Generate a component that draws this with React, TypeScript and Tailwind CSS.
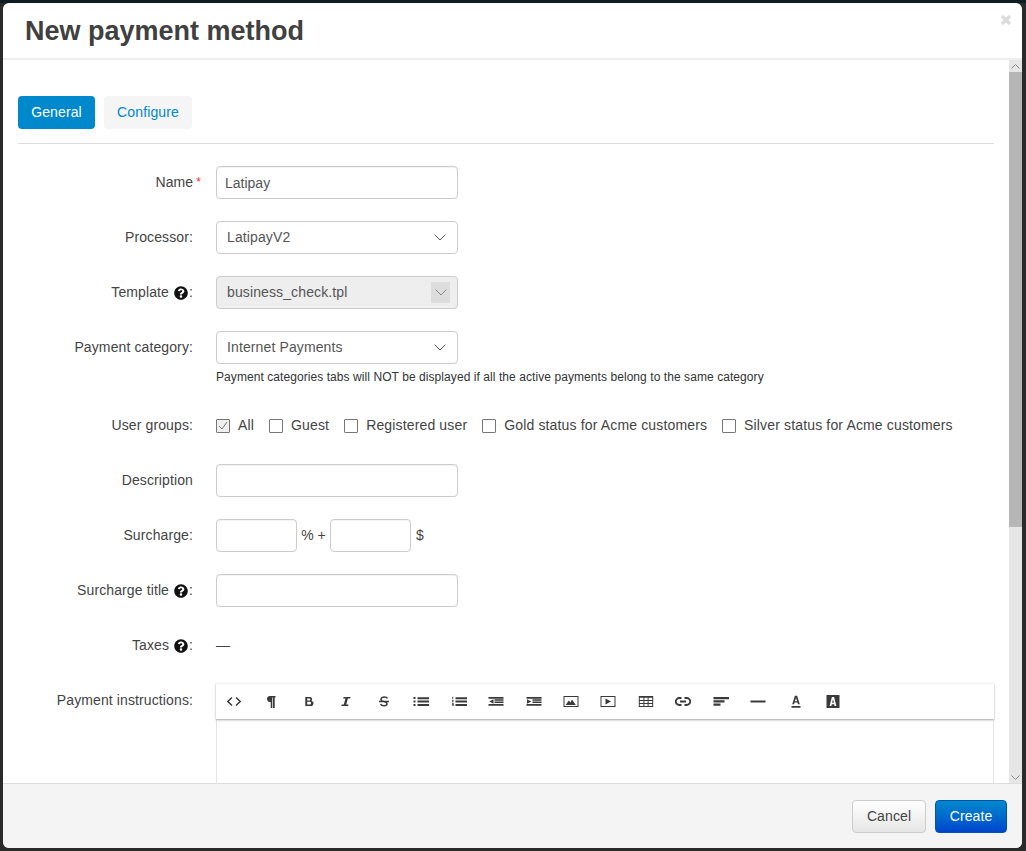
import React from "react";
import { FaQuestionCircle } from "react-icons/fa";

const C = "#3a3a3a";
const ic: Record<string, React.ReactNode> = {
  html: <path d="M6 3.500 1.800 7.500 6 11.500M10 3.500l4.200 4-4.200 4" fill="none" stroke={C} strokeWidth="1.500" />,
  para: <path d="M6.500 2H12.500V3.500h-.8V14H10V3.500H9.300V14H7.700V8A2.900 2.900 0 0 1 6.500 2Z" fill={C} />,
  bold: <path fillRule="evenodd" d="M4.300 3H8.800a2.300 2.300 0 0 1 1.700 3.900A2.500 2.500 0 0 1 9.200 12H4.300ZM6.200 4.500v1.900h2.200a.95.95 0 0 0 0-1.900Zm0 3.300v2.700h2.500a1.350 1.350 0 0 0 0-2.700Z" fill={C} />,
  italic: <path d="M5.500 3h7l-.3 1.400h-2.300L8.300 10.600h2.200L10.200 12H3.300l.3-1.400h2.200L7.400 4.400H5.200Z" fill={C} />,
  strike: <path d="M11.500 4.300C11 3.400 9.900 3 8.300 3 6.400 3 5 3.900 5 5.200c0 1.800 2 2.100 3.500 2.500 1.500.4 2.500.8 2.500 2 0 1.300-1.200 2-3 2-1.700 0-3-.7-3.400-1.700M3 7.600h10" fill="none" stroke={C} strokeWidth="1.500" />,
  ul: <path d="M.5 3h2v2h-2Zm0 3.500h2v2h-2Zm0 3.500h2v2h-2ZM4.500 3.200H16V5.200H4.500Zm0 3.400H16v2H4.500Zm0 3.400H16v2H4.500Z" fill={C} />,
  ol: <path d="M1.300 2.800h.9v2.400h-.9Zm-.4 3.500h1.800v.6l-.9.8h.9v.6H.9v-.6l.9-.8H.9Zm0 3h1.800V12H.9v-.6h.9v-.3H.9v-.5h.9v-.3H.9ZM4.500 3.200H16V5.200H4.500Zm0 3.400H16v2H4.500Zm0 3.400H16v2H4.500Z" fill={C} />,
  outdent: <path d="M.5 3h15v1.700H.5Zm6 2.300h9v1.500h-9Zm0 2.300h9v1.500h-9Zm-6 2.300h15v1.900H.5ZM5.500 5.300v4.400L1.300 7.500Z" fill={C} />,
  indent: <path d="M.5 3h15v1.700H.5Zm6 2.300h9v1.500h-9Zm0 2.300h9v1.500h-9Zm-6 2.300h15v1.900H.5ZM1 5.300v4.400L5.200 7.500Z" fill={C} />,
  image: <path fillRule="evenodd" d="M.5 2h15v11H.5Zm1 1v9h13V3ZM2.700 11l3-4.500 1.800 2 1.500-3 3.800 5.500Z" fill={C} />,
  video: <path fillRule="evenodd" d="M.5 2h15v11H.5Zm1 1v9h13V3ZM5.500 4.500l5.500 3-5.500 3Z" fill={C} />,
  table: <path fillRule="evenodd" d="M.8 2h14.400v11H.8Zm1 1.800v2.200h3.600V3.800Zm4.600 0v2.200h3.200V3.800Zm4.200 0v2.200h3.600V3.800ZM1.800 7v1.900h3.600V7Zm4.600 0v1.900h3.200V7Zm4.200 0v1.900h3.600V7ZM1.800 9.900V12h3.600V9.900Zm4.600 0V12h3.200V9.900Zm4.200 0V12h3.600V9.900Z" fill={C} />,
  link: <path d="M6.500 4H4.300a3.500 3.500 0 0 0 0 7h2.200M9.500 4h2.200a3.500 3.500 0 0 1 0 7H9.500M5 7.500h6" fill="none" stroke={C} strokeWidth="1.800" />,
  align: <path d="M.5 3H16v2.200H.5Zm0 3.300h11v2.200H.5Zm0 3.300h7v2.200h-7Z" fill={C} />,
  hr: <path d="M.5 6.500h15v2H.5Z" fill={C} />,
  color: <path fillRule="evenodd" d="M6.900 1.800h2.200l2.700 8.400H9.900l-.4-1.600H6.500l-.4 1.600H4.200ZM8 4 6.900 7.300h2.200ZM3.500 12h9v1.700h-9Z" fill={C} />,
  bg: <path fillRule="evenodd" d="M1.500 1h13v13h-13ZM6.900 3 4.600 12h1.800l.4-1.800h2.400l.4 1.800h1.800L9.100 3ZM8 5.200l.9 3.600H7.100Z" fill={C} />,
};
const tools = ["html", "para", "bold", "italic", "strike", "ul", "ol", "outdent", "indent", "image", "video", "table", "link", "align", "hr", "color", "bg"];

const Help = () => <FaQuestionCircle className="inline-block text-[14px] text-[#111] ml-[5px] mr-[1px]" />;

function Row({ label, children, h = "h-[33px]", mt = "mt-[22px]", req = false, help = false, colon = true }: { label: string; children: React.ReactNode; h?: string; mt?: string; req?: boolean; help?: boolean; colon?: boolean }) {
  return (
    <div className={`flex items-start ${mt}`}>
      <div className="w-[175px] shrink-0 h-[33px] flex items-center justify-end whitespace-pre text-[14px] tracking-[0.11px] text-[#444]">
        {label}
        {help && <Help />}
        {req && <span className="text-[#e33] text-[12px] ml-[3px] -mr-[8px] -mt-[1px]">*</span>}
        {colon && ":"}
      </div>
      <div className={`ml-[23px] ${h}`}>{children}</div>
    </div>
  );
}

const Chevron = ({ color = "#555" }: { color?: string }) => (
  <svg width="12" height="7" viewBox="0 0 12 7" fill="none"><path d="M.6.6 6 6 11.400.6" stroke={color} strokeWidth="1" /></svg>
);

const inputCls = "h-[33px] rounded-[4px] border border-[#ccc] bg-white px-[8px] text-[14px] text-[#555] shadow-[inset_0_1px_1px_rgba(0,0,0,0.05)] outline-none";

function Select({ value, disabled = false }: { value: string; disabled?: boolean }) {
  return (
    <div className={`w-[242px] h-[33px] rounded-[4px] border border-[#ccc] flex items-center justify-between pl-[10px] pr-[8px] text-[14px] tracking-[0.12px] text-[#555] ${disabled ? "bg-[#eeeeee]" : "bg-white"}`}>
      <span>{value}</span>
      {disabled ? (
        <span className="w-[19px] h-[21px] bg-[#dddddd] flex items-center justify-center -mr-[1px]"><Chevron color="#888" /></span>
      ) : (
        <span className="w-[19px] flex justify-center"><Chevron /></span>
      )}
    </div>
  );
}

function Check({ label, checked = false }: { label: string; checked?: boolean }) {
  return (
    <label className="flex items-center gap-[8px] text-[14px] tracking-[0.15px] text-[#444]">
      <span className={`w-[14px] h-[14px] border border-[#777] rounded-[1px] flex items-center justify-center ${checked ? "bg-[#f0f0f0]" : "bg-white"}`}>
        {checked && <svg width="10" height="10" viewBox="0 0 10 10" fill="none"><path d="M1 5l3 3 5-7" stroke="#777" strokeWidth="1" /></svg>}
      </span>
      {label}
    </label>
  );
}

export default function App() {
  return (
    <div className="w-[1026px] h-[851px] bg-[#2a2a2a] pt-[3px] pl-[3px] overflow-hidden relative font-['Liberation_Sans',Arial,sans-serif]">
      <div className="absolute inset-x-0 top-0 h-[3px] bg-[#0b1c22]" />
      <div className="relative w-[1019px] h-[845px] bg-white rounded-[6px] flex flex-col overflow-hidden">
        <div className="h-[57px] shrink-0 border-b-2 border-[#eeeeee] flex items-start justify-between pl-[22px] pr-[10px]">
          <h1 className="mt-[10px] text-[27px] leading-[36px] font-bold text-[#404040]">New payment method</h1>
          <svg className="mt-[11px]" width="12" height="12" viewBox="0 0 12 12"><path d="M2 2l8 8M10 2l-8 8" stroke="#dcdcdc" strokeWidth="3.400" /></svg>
        </div>

        <div className="flex-1 min-h-0 flex">
          <div className="flex-1 min-w-0 pl-[15px] pr-[15px] overflow-hidden">
            <div className="mt-[36px] flex gap-[9px] tracking-[0.12px]">
              <span className="h-[33px] w-[77px] rounded-[4px] bg-[#0088cc] text-white text-[14px] flex items-center justify-center">General</span>
              <span className="h-[33px] w-[88px] rounded-[4px] bg-[#f5f5f5] text-[#0088cc] text-[14px] flex items-center justify-center">Configure</span>
            </div>
            <div className="mt-[14px] border-b border-[#dddddd]" />

            <Row label="Name" req colon={false} mt="mt-[22px]">
              <input readOnly value="Latipay" className={`${inputCls} w-[242px]`} />
            </Row>
            <Row label="Processor"><Select value="LatipayV2" /></Row>
            <Row label="Template" help><Select value="business_check.tpl" disabled /></Row>
            <Row label="Payment category" h="h-[57px]">
              <Select value="Internet Payments" />
              <p className="mt-[5px] text-[12px] leading-[16px] tracking-[0.07px] text-[#333] whitespace-nowrap">Payment categories tabs will NOT be displayed if all the active payments belong to the same category</p>
            </Row>
            <Row label="User groups" mt="mt-[21px]">
              <div className="h-[33px] flex items-center gap-[15px] whitespace-nowrap">
                <Check label="All" checked />
                <Check label="Guest" />
                <Check label="Registered user" />
                <Check label="Gold status for Acme customers" />
                <Check label="Silver status for Acme customers" />
              </div>
            </Row>
            <Row label="Description" colon={false}><input readOnly className={`${inputCls} w-[242px]`} /></Row>
            <Row label="Surcharge">
              <div className="flex items-center text-[14px] text-[#444]">
                <input readOnly className={`${inputCls} w-[81px]`} />
                <span className="w-[33px] text-center">% +</span>
                <input readOnly className={`${inputCls} w-[81px]`} />
                <span className="ml-[5px]">$</span>
              </div>
            </Row>
            <Row label="Surcharge title" help><input readOnly className={`${inputCls} w-[242px]`} /></Row>
            <Row label="Taxes" help>
              <div className="h-[33px] flex items-center text-[14px] text-[#444]">—</div>
            </Row>
            <Row label="Payment instructions" h="h-[100px]">
              <div className="w-[778px] -mt-[1px]">
                <div className="h-[36px] bg-white border-t border-[#f3f3f3] shadow-[0_1px_2px_rgba(0,0,0,0.35)] relative flex items-center">
                  {tools.map((n, i) => (
                    <svg key={n} className={i === 0 ? "ml-[10px]" : "ml-[21.450px]"} width="16" height="16" viewBox="0 0 16 16">{ic[n]}</svg>
                  ))}
                </div>
                <div className="h-[70px] border-x border-[#e4e4e4]" />
              </div>
            </Row>
          </div>

          <div className="w-[13px] shrink-0 bg-[#e6e6e6] flex flex-col">
            <div className="h-[12px] flex items-center justify-center"><svg width="9" height="5" viewBox="0 0 9 5" fill="none"><path d="M.5 4.500 4.500.5l4 4" stroke="#888" /></svg></div>
            <div className="h-[455px] bg-[#b6b6b6]" />
            <div className="flex-1" />
            <div className="h-[12px] flex items-center justify-center"><svg width="9" height="5" viewBox="0 0 9 5" fill="none"><path d="M.5.5l4 4 4-4" stroke="#888" /></svg></div>
          </div>
        </div>

        <div className="h-[65px] shrink-0 bg-[#f4f4f4] border-t border-[#dddddd] flex items-center justify-end gap-[9px] pr-[15px] tracking-[0.11px]">
          <button className="w-[74px] h-[33px] rounded-[4px] border border-[#cccccc] bg-gradient-to-b from-white to-[#e6e6e6] text-[14px] text-[#444]">Cancel</button>
          <button className="w-[72px] h-[33px] rounded-[4px] border border-[#0055aa] bg-gradient-to-b from-[#0088cc] to-[#0044cc] text-[14px] text-white">Create</button>
        </div>
      </div>
    </div>
  );
}
